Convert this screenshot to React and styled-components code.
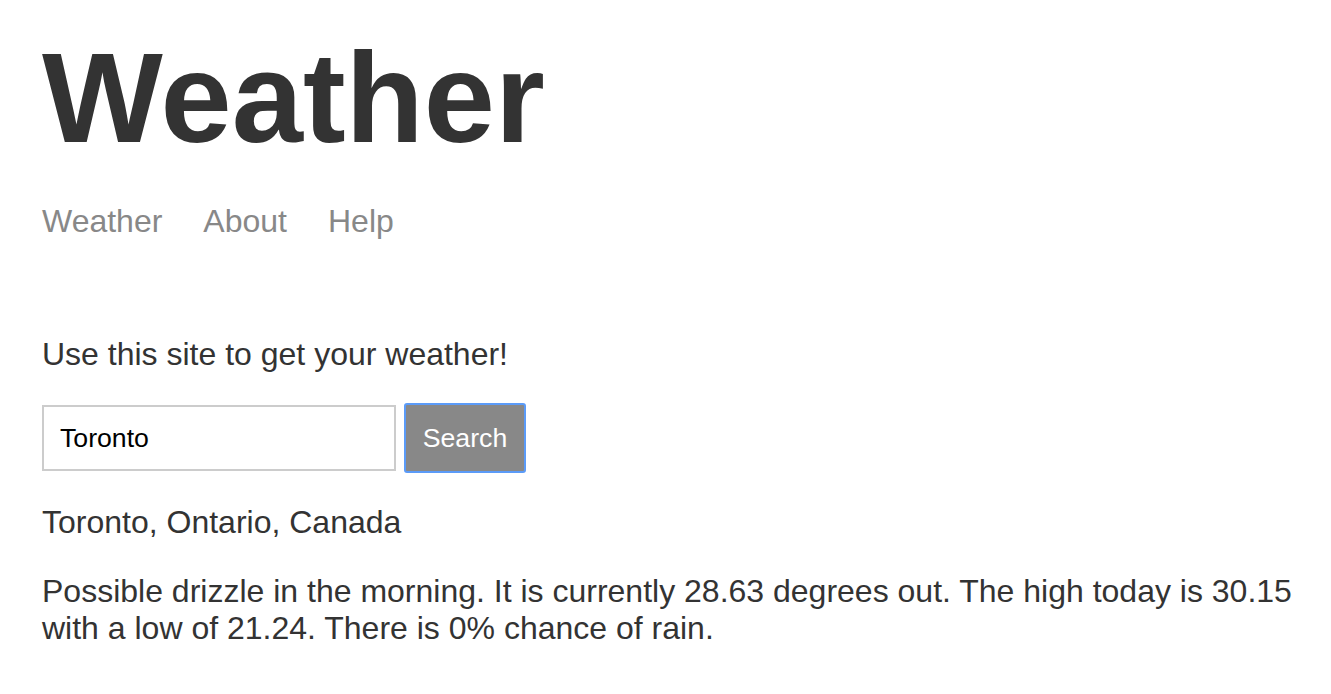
import React, { useState } from "react";
import styled, { createGlobalStyle } from "styled-components";

const GlobalStyle = createGlobalStyle`
  body {
    margin: 0;
    background: #ffffff;
    color: #333333;
    font-family: "Liberation Sans", Arial, sans-serif;
  }
`;

const Page = styled.div`
  padding: 24px 32px 0 42px;
`;

const Header = styled.header`
  margin-bottom: 96px;
`;

const Title = styled.h1`
  font-size: 128px;
  font-weight: bold;
  line-height: normal;
  margin: 0 0 32px;
`;

const Nav = styled.nav`
  display: flex;
  gap: 41px;
`;

const NavLink = styled.a`
  font-size: 32px;
  line-height: normal;
  color: #888888;
  text-decoration: none;
`;

const Text = styled.p`
  font-size: 32px;
  line-height: normal;
  margin: ${(p) => p.$margin || "0"};
`;

const Form = styled.form`
  display: flex;
  align-items: center;
  gap: 8px;
`;

const Input = styled.input`
  box-sizing: border-box;
  width: 354px;
  height: 66px;
  padding: 0 16px;
  border: 2px solid #cccccc;
  font-family: "Liberation Sans", Arial, sans-serif;
  font-size: 26.67px;
  color: #000000;
  outline: none;
`;

const Button = styled.button`
  box-sizing: border-box;
  width: 122px;
  height: 70px;
  padding: 0;
  border: 2px solid #5b9bf8;
  border-radius: 3px;
  background: #888888;
  color: #ffffff;
  font-family: "Liberation Sans", Arial, sans-serif;
  font-size: 26.67px;
  cursor: pointer;
`;

const App = () => {
  const [location, setLocation] = useState("Toronto");

  return (
    <Page>
      <GlobalStyle />
      <Header>
        <Title>Weather</Title>
        <Nav>
          <NavLink href="#">Weather</NavLink>
          <NavLink href="#">About</NavLink>
          <NavLink href="#">Help</NavLink>
        </Nav>
      </Header>

      <Text $margin="0 0 30px">Use this site to get your weather!</Text>

      <Form onSubmit={(e) => e.preventDefault()}>
        <Input value={location} onChange={(e) => setLocation(e.target.value)} />
        <Button>Search</Button>
      </Form>

      <Text $margin="31px 0 0">Toronto, Ontario, Canada</Text>
      <Text $margin="32px 0 0">
        Possible drizzle in the morning. It is currently 28.63 degrees out. The high today is 30.15
        with a low of 21.24. There is 0% chance of rain.
      </Text>
    </Page>
  );
};

export default App;
